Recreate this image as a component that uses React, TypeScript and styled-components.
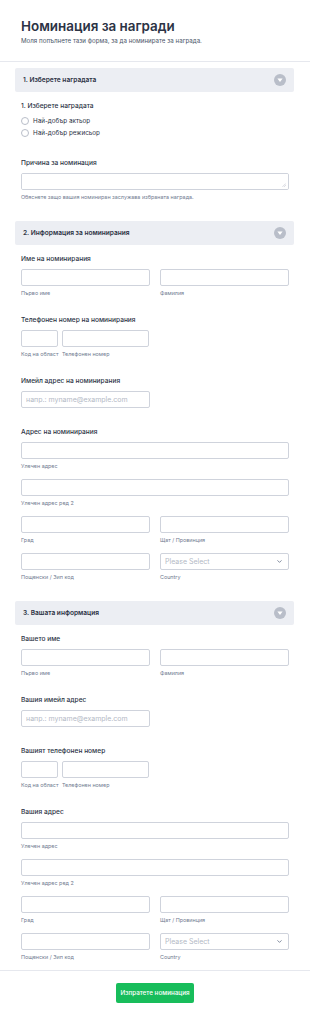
import styled, { createGlobalStyle } from 'styled-components'
import { ChevronDown } from 'lucide-react'

const GlobalStyle = createGlobalStyle`
  body {
    margin: 0;
    background: #fff;
    font-family: Inter, 'Noto Sans', 'Liberation Sans', sans-serif;
    color: #2c3345;
  }
`

const texts = {
  title: 'Номинация за награди',
  subtitle: 'Моля попълнете тази форма, за да номинирате за награда.',
  submit: 'Изпратете номинация',
  email: 'напр.: myname@example.com',
  first: 'Първо име',
  last: 'Фамилия',
  area: 'Код на област',
  phone: 'Телефонен номер',
  street: 'Улечен адрес',
  street2: 'Улечен адрес ред 2',
  city: 'Град',
  state: 'Щат / Провинция',
  zip: 'Пощенски / Зип код',
  country: 'Country',
  select: 'Please Select'
}

const ToggleIcon = () => (
  <svg width="12" height="12" viewBox="0 0 12 12">
    <circle cx="6" cy="6" r="6" fill="#b9bec9" />
    <path d="M3.4 4.6 H8.6 L6 7.9 Z" fill="#fff" />
  </svg>
)

const ResizeGrip = () => (
  <svg width="4" height="4" viewBox="0 0 4 4">
    <path d="M0.5 3.8 L3.8 0.5 M2.2 3.8 L3.8 2.2" stroke="#b9bec9" strokeWidth="0.6" />
  </svg>
)

const SectionBar = ({ title }: { title: string }) => (
  <Bar>
    <BarTitle>{title}</BarTitle>
    <ToggleIcon />
  </Bar>
)

const NameField = ({ label }: { label: string }) => (
  <Field>
    <Label>{label}</Label>
    <Row>
      <Cell>
        <Input />
        <SubLabel>{texts.first}</SubLabel>
      </Cell>
      <Cell>
        <Input />
        <SubLabel>{texts.last}</SubLabel>
      </Cell>
    </Row>
  </Field>
)

const PhoneField = ({ label }: { label: string }) => (
  <Field>
    <Label>{label}</Label>
    <PhoneRow>
      <Cell>
        <Input />
        <SubLabel>{texts.area}</SubLabel>
      </Cell>
      <Cell>
        <Input />
        <SubLabel>{texts.phone}</SubLabel>
      </Cell>
    </PhoneRow>
  </Field>
)

const EmailField = ({ label }: { label: string }) => (
  <Field>
    <Label>{label}</Label>
    <Input $width={129} placeholder={texts.email} />
  </Field>
)

const AddressField = ({ label }: { label: string }) => (
  <Field>
    <Label>{label}</Label>
    <AddressGrid>
      <Cell $span>
        <Input />
        <SubLabel>{texts.street}</SubLabel>
      </Cell>
      <Cell $span>
        <Input />
        <SubLabel>{texts.street2}</SubLabel>
      </Cell>
      <Cell>
        <Input />
        <SubLabel>{texts.city}</SubLabel>
      </Cell>
      <Cell>
        <Input />
        <SubLabel>{texts.state}</SubLabel>
      </Cell>
      <Cell>
        <Input />
        <SubLabel>{texts.zip}</SubLabel>
      </Cell>
      <Cell>
        <SelectWrap>
          <Select defaultValue="">
            <option value="">{texts.select}</option>
          </Select>
          <ChevronDown size={7} strokeWidth={2.5} color="#57647e" />
        </SelectWrap>
        <SubLabel>{texts.country}</SubLabel>
      </Cell>
    </AddressGrid>
  </Field>
)

export default function App() {
  return (
    <>
      <GlobalStyle />
      <Header>
        <Title>{texts.title}</Title>
        <Subtitle>{texts.subtitle}</Subtitle>
      </Header>
      <Main>
        <Section>
          <SectionBar title="1. Изберете наградата" />
          <Field>
            <Label>1. Изберете наградата</Label>
            <RadioList>
              <RadioRow>
                <Radio type="radio" name="award" />
                Най-добър актьор
              </RadioRow>
              <RadioRow>
                <Radio type="radio" name="award" />
                Най-добър режисьор
              </RadioRow>
            </RadioList>
          </Field>
          <Field>
            <Label>Причина за номинация</Label>
            <TextAreaWrap>
              <TextArea />
              <ResizeGrip />
            </TextAreaWrap>
            <SubLabel>Обяснете защо вашия номиниран заслужава избраната награда.</SubLabel>
          </Field>
        </Section>
        <Section>
          <SectionBar title="2. Информация за номинирания" />
          <NameField label="Име на номинирания" />
          <PhoneField label="Телефонен номер на номинирания" />
          <EmailField label="Имейл адрес на номинирания" />
          <AddressField label="Адрес на номинирания" />
        </Section>
        <Section>
          <SectionBar title="3. Вашата информация" />
          <NameField label="Вашето име" />
          <EmailField label="Вашия имейл адрес" />
          <PhoneField label="Вашият телефонен номер" />
          <AddressField label="Вашия адрес" />
        </Section>
      </Main>
      <Footer>
        <SubmitButton>{texts.submit}</SubmitButton>
      </Footer>
    </>
  )
}

const Header = styled.header`
  padding: 17px 21px 16px;
  border-bottom: 1px solid #e6e8ee;
`

const Title = styled.h1`
  margin: 0;
  font-size: 13.4px;
  line-height: 19px;
  font-weight: 600;
  color: #2c3345;
`

const Subtitle = styled.p`
  margin: 0;
  font-size: 6.2px;
  line-height: 9px;
  color: #4a5468;
`

const Main = styled.main`
  padding: 6px 16px 0 15px;
`

const Section = styled.section`
  margin-bottom: 21px;
  &:last-child {
    margin-bottom: 10px;
  }
`

const Bar = styled.div`
  height: 24px;
  background: #eceef3;
  border-radius: 2px;
  display: flex;
  align-items: center;
  justify-content: space-between;
  padding: 0 8px;
  margin-bottom: 9px;
  svg {
    display: block;
  }
`

const BarTitle = styled.div`
  font-size: 6.6px;
  font-weight: 600;
  color: #2c3345;
`

const Field = styled.div`
  padding: 0 5px 0 6px;
  margin-bottom: 19px;
  &:last-child {
    margin-bottom: 0;
  }
`

const Label = styled.div`
  font-size: 6.6px;
  line-height: 10px;
  font-weight: 500;
  color: #2c3345;
  margin-bottom: 5px;
`

const RadioList = styled.div`
  margin-top: -1px;
  display: flex;
  flex-direction: column;
`

const RadioRow = styled.label`
  height: 12px;
  display: flex;
  align-items: center;
  gap: 4px;
  font-size: 6.3px;
  color: #2c3345;
`

const Radio = styled.input`
  appearance: none;
  margin: 0;
  width: 8px;
  height: 8px;
  border: 1px solid #b9bec9;
  border-radius: 50%;
  background: #fff;
`

const inputBase = `
  box-sizing: border-box;
  height: 17px;
  border: 1px solid #cfd3dc;
  border-radius: 2px;
  background: #fff;
  margin: 0;
  font-family: inherit;
  outline: none;
`

const Input = styled.input<{ $width?: number }>`
  ${inputBase}
  display: block;
  width: ${(p) => (p.$width ? `${p.$width}px` : '100%')};
  padding: 0 4px;
  font-size: 7px;
  color: #2c3345;
  &::placeholder {
    color: #b3b9c5;
  }
`

const TextAreaWrap = styled.div`
  position: relative;
  svg {
    position: absolute;
    right: 3px;
    bottom: 3px;
    display: block;
  }
`

const TextArea = styled.textarea`
  ${inputBase}
  display: block;
  width: 100%;
  resize: none;
  padding: 2px 5px;
`

const SubLabel = styled.div`
  margin-top: 4px;
  font-size: 5.4px;
  line-height: 6px;
  color: #6f7a8f;
  white-space: nowrap;
`

const Row = styled.div`
  display: grid;
  grid-template-columns: 1fr 1fr;
  column-gap: 10px;
`

const PhoneRow = styled.div`
  display: grid;
  grid-template-columns: 37px 87px;
  column-gap: 4px;
`

const AddressGrid = styled.div`
  display: grid;
  grid-template-columns: 1fr 1fr;
  column-gap: 10px;
  row-gap: 10px;
`

const Cell = styled.div<{ $span?: boolean }>`
  min-width: 0;
  grid-column: ${(p) => (p.$span ? '1 / -1' : 'auto')};
`

const SelectWrap = styled.div`
  position: relative;
  svg {
    position: absolute;
    right: 6px;
    top: 5px;
  }
`

const Select = styled.select`
  ${inputBase}
  appearance: none;
  display: block;
  width: 100%;
  padding: 0 4px;
  font-size: 7px;
  color: #b3b9c5;
`

const Footer = styled.footer`
  border-top: 1px solid #e6e8ee;
  padding: 12px 0 21px;
  display: flex;
  justify-content: center;
`

const SubmitButton = styled.button`
  height: 20px;
  padding: 0;
  width: 78px;
  border: none;
  border-radius: 2px;
  background: #18bd5b;
  color: #fff;
  font-family: inherit;
  font-size: 6.3px;
  font-weight: 500;
  white-space: nowrap;
  cursor: pointer;
`
